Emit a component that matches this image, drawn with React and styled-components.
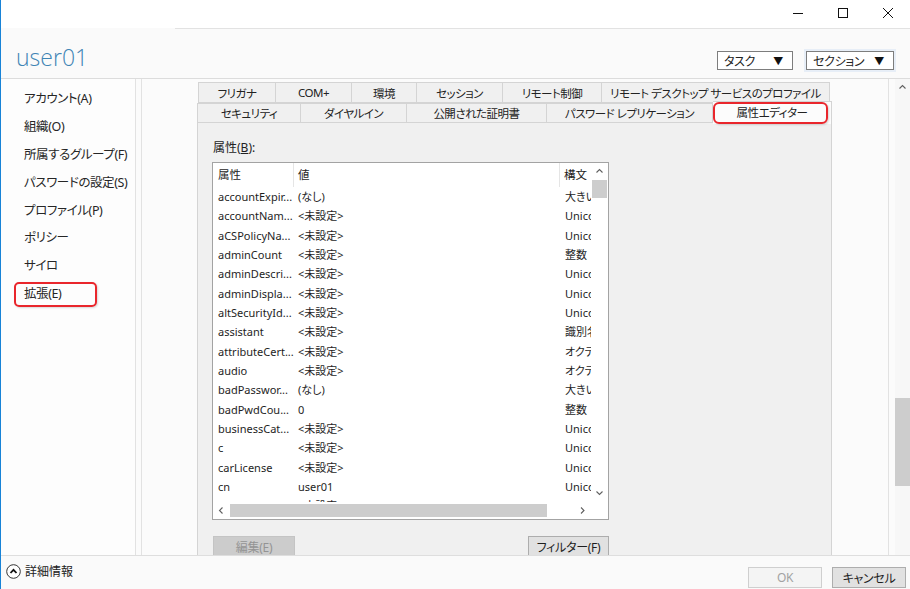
import React from 'react';
import styled, { createGlobalStyle } from 'styled-components';

const GlobalStyle = createGlobalStyle`
  html, body {
    margin: 0;
    padding: 0;
    background: #fff;
  }
  body {
    font-family: "Noto Sans", "Noto Sans CJK JP", sans-serif;
    font-feature-settings: "palt";
    color: #1e1e1e;
  }
`;

const Window = styled.div`
  width: 910px;
  height: 589px;
  box-sizing: border-box;
  border-left: 1px solid #1883d7;
  display: flex;
  flex-direction: column;
  overflow: hidden;
  background: #fff;
`;

const TitleBar = styled.div`
  height: 28px;
  flex: none;
  display: flex;
  justify-content: flex-end;
  background: #fff;
`;

const WinButton = styled.div`
  width: 45px;
  height: 26px;
  display: flex;
  align-items: center;
  justify-content: center;
`;

const Header = styled.header`
  height: 51px;
  flex: none;
  box-sizing: border-box;
  display: flex;
  align-items: flex-end;
  justify-content: space-between;
  padding: 0 16px 7px 15px;
  border-bottom: 1px solid #dcdcdc;
  background: linear-gradient(#e2e2e2, #e2e2e2) no-repeat 174px 0 / 100% 1px,
    #fafafa;
`;

const Title = styled.h1`
  margin: 0 0 -1px;
  font-family: "Open Sans", "Noto Sans", sans-serif;
  font-weight: 300;
  font-size: 23px;
  line-height: 30px;
  color: #3f85b5;
`;

const HeaderMenus = styled.div`
  display: flex;
  gap: 13px;
  margin-bottom: 1px;
`;

const Dropdown = styled.div`
  width: ${(p) => p.$width}px;
  height: 19px;
  box-sizing: border-box;
  border: 1px solid #7d7d7d;
  background: #fff;
  display: flex;
  align-items: center;
  justify-content: space-between;
  padding: 0 9px 0 6px;
  font-size: 12px;
  letter-spacing: -0.3px;
  color: #222;
  box-shadow: ${(p) => (p.$focus ? '0 0 0 2px #e7eef7' : 'none')};
`;

const Arrow = styled.span`
  font-size: 10px;
  color: #111;
`;

const Body = styled.div`
  flex: 1;
  display: flex;
  min-height: 0;
  overflow: hidden;
`;

const Nav = styled.nav`
  width: 135px;
  flex: none;
  box-sizing: border-box;
  border-right: 1px solid #e2e2e2;
  padding-top: 6px;
  position: relative;
  background: #fdfdfd;
`;

const NavItem = styled.div`
  position: relative;
  height: 27.9px;
  line-height: 27.9px;
  padding-left: 23px;
  font-size: 12.5px;
  letter-spacing: -0.4px;
  color: #262626;
  white-space: nowrap;

  &::after {
    content: '';
    display: ${(p) => (p.$marked ? 'block' : 'none')};
    position: absolute;
    left: 13px;
    top: 2px;
    width: 83px;
    height: 25px;
    box-sizing: border-box;
    border: 2px solid #e9262c;
    border-radius: 5px;
    box-shadow: 1px 1px 2px rgba(0, 0, 0, 0.15);
  }
`;

const Spacer = styled.div`
  width: 6px;
  flex: none;
  box-sizing: border-box;
  border-right: 1px solid #e2e2e2;
  background: #fbfbfb;
`;

const Content = styled.section`
  width: 746px;
  flex: none;
  box-sizing: border-box;
  padding: 3px 0 0 55px;
  background: #fbfbfb;
  display: flex;
  flex-direction: column;
`;

const TabArea = styled.div`
  width: 635px;
  flex: 1;
  display: flex;
  flex-direction: column;
`;

const TabRow = styled.div`
  display: flex;
  height: ${(p) => p.$h}px;
  padding-left: ${(p) => p.$indent}px;
  position: relative;
  z-index: ${(p) => (p.$front ? 2 : 1)};
`;

const Tab = styled.div`
  position: relative;
  width: ${(p) => p.$w}px;
  box-sizing: border-box;
  display: flex;
  align-items: center;
  justify-content: center;
  font-size: 11.5px;
  letter-spacing: -0.5px;
  color: #222;
  white-space: nowrap;
  border: 1px solid #d4d4d4;
  border-left-width: ${(p) => (p.$first ? 1 : 0)}px;
  border-bottom-width: ${(p) => (p.$active ? 0 : 1)}px;
  background: ${(p) => (p.$active ? '#fcfcfc' : '#f0f0f0')};
  margin-top: ${(p) => (p.$active ? -2 : 0)}px;
  height: ${(p) => (p.$active ? 'calc(100% + 3px)' : '100%')};
  padding-bottom: ${(p) => (p.$active ? 2 : 0)}px;

  &::after {
    content: '';
    display: ${(p) => (p.$marked ? 'block' : 'none')};
    position: absolute;
    left: 0;
    right: 3px;
    top: 0;
    bottom: 0;
    border: 2px solid #e9262c;
    border-radius: 6px;
    box-shadow: 1px 1px 2px rgba(0, 0, 0, 0.15);
  }
`;

const Panel = styled.div`
  flex: 1;
  box-sizing: border-box;
  border: 1px solid #d4d4d4;
  background: #f0f0f0;
  padding: 17px 14px 0;
  margin-top: -1px;
`;

const FieldLabel = styled.div`
  font-size: 12px;
  line-height: 16px;
  color: #222;
  margin-left: 1px;

  u {
    text-decoration: underline;
  }
`;

const ListBox = styled.div`
  margin-top: 6px;
  width: 397px;
  height: 358px;
  box-sizing: border-box;
  border: 1px solid #a3a3a3;
  background: #fff;
  display: grid;
  grid-template-columns: 1fr 17px;
  grid-template-rows: 1fr 17px;
  overflow: hidden;
`;

const ListView = styled.div`
  overflow: hidden;
  display: grid;
  grid-template-columns: 81px 266px 1fr;
  grid-template-rows: 24px;
  grid-auto-rows: 19.33px;
  align-content: start;
  font-size: 11px;
  color: #1e1e1e;
`;

const HeadCell = styled.div`
  line-height: 22px;
  padding: 1px 0 0 ${(p) => p.$pad}px;
  border-right: ${(p) => (p.$sep ? '1px solid #e5e5e5' : 'none')};
  white-space: nowrap;
  overflow: hidden;
  font-size: 11.5px;
`;

const Cell = styled.div`
  line-height: 19.33px;
  padding-left: ${(p) => p.$pad}px;
  white-space: nowrap;
  overflow: hidden;
`;

const VScroll = styled.div`
  display: flex;
  flex-direction: column;
  background: #fff;
`;

const HScroll = styled.div`
  display: flex;
  align-items: center;
  background: #fff;
`;

const ScrollBtn = styled.div`
  width: ${(p) => p.$w || 17}px;
  height: 17px;
  flex: none;
  display: flex;
  align-items: center;
  justify-content: center;
`;

const Track = styled.div`
  flex: 1;
  display: flex;
  flex-direction: ${(p) => (p.$horizontal ? 'row' : 'column')};
  align-items: ${(p) => (p.$horizontal ? 'center' : 'stretch')};
`;

const Thumb = styled.div`
  background: #cdcdcd;
  ${(p) =>
    p.$horizontal
      ? `height: 13px; width: ${p.$size}px; margin-left: ${p.$offset}px;`
      : `width: 15px; height: ${p.$size}px; margin: ${p.$offset}px 0 0 1px;`}
`;

const Corner = styled.div`
  background: #fff;
`;

const ButtonRow = styled.div`
  width: 397px;
  margin-top: 16px;
  display: flex;
  justify-content: space-between;
  padding-left: 1px;
  box-sizing: border-box;
`;

const Button = styled.div`
  width: ${(p) => p.$w}px;
  height: 22px;
  box-sizing: border-box;
  display: flex;
  align-items: center;
  justify-content: center;
  font-size: 12px;
  letter-spacing: -0.3px;
  border: 1px solid ${(p) => (p.$disabled ? '#c4c4c4' : '#adadad')};
  background: ${(p) => (p.$disabled ? '#cccccc' : '#e1e1e1')};
  color: ${(p) => (p.$disabled ? '#949494' : '#1e1e1e')};
`;

const MainScroll = styled.div`
  width: 22px;
  flex: none;
  box-sizing: border-box;
  border-left: 1px solid #e2e2e2;
  background: #fbfbfb;
  display: flex;
  justify-content: flex-end;
`;

const MainTrack = styled.div`
  width: 15px;
  display: flex;
  flex-direction: column;
  background: #f7f7f7;
`;

const MainThumb = styled.div`
  height: 88px;
  margin-top: 302px;
  background: #cdcdcd;
`;

const Footer = styled.footer`
  height: 34px;
  flex: none;
  box-sizing: border-box;
  border-top: 1px solid #dedede;
  background: #fafafa;
  display: flex;
  justify-content: space-between;
  padding: 0 4px 0 5px;
`;

const Details = styled.div`
  display: flex;
  align-items: center;
  gap: 4px;
  font-size: 12px;
  color: #222;
  margin-top: 6px;
  align-self: flex-start;
`;

const FooterButtons = styled.div`
  display: flex;
  gap: 10px;
  align-self: flex-end;
  margin-bottom: 1px;
`;

const DialogButton = styled.div`
  width: 74px;
  height: 21px;
  box-sizing: border-box;
  display: flex;
  align-items: center;
  justify-content: center;
  font-size: 12px;
  letter-spacing: -0.3px;
  border: 1px solid ${(p) => (p.$disabled ? '#cfcfcf' : '#adadad')};
  background: ${(p) => (p.$disabled ? '#f4f4f4' : '#e1e1e1')};
  color: ${(p) => (p.$disabled ? '#a2a2a2' : '#1e1e1e')};
`;

const Chevron = ({ dir }) => {
  const paths = {
    up: 'M1.5 5.5 L4.5 2.5 L7.5 5.5',
    down: 'M1.5 2.5 L4.5 5.5 L7.5 2.5',
    left: 'M5.5 1.5 L2.5 4.5 L5.5 7.5',
    right: 'M3 1.5 L6 4.5 L3 7.5',
  };
  return (
    <svg width="9" height="9" viewBox="0 0 9 9">
      <path d={paths[dir]} fill="none" stroke="#606060" strokeWidth="1.1" />
    </svg>
  );
};

const navItems = [
  'アカウント(A)',
  '組織(O)',
  '所属するグループ(F)',
  'パスワードの設定(S)',
  'プロファイル(P)',
  'ポリシー',
  'サイロ',
  '拡張(E)',
];

const tabsTop = [
  ['フリガナ', 78],
  ['COM+', 76],
  ['環境', 65],
  ['セッション', 86],
  ['リモート制御', 99],
  ['リモート デスクトップ サービスのプロファイル', 228],
];

const tabsBottom = [
  ['セキュリティ', 104],
  ['ダイヤルイン', 106],
  ['公開された証明書', 140],
  ['パスワード レプリケーション', 166],
  ['属性エディター', 119],
];

const rows = [
  ['accountExpir...', '(なし)', '大きい整数'],
  ['accountNam...', '<未設定>', 'Unicode 文字列'],
  ['aCSPolicyNa...', '<未設定>', 'Unicode 文字列'],
  ['adminCount', '<未設定>', '整数'],
  ['adminDescri...', '<未設定>', 'Unicode 文字列'],
  ['adminDispla...', '<未設定>', 'Unicode 文字列'],
  ['altSecurityId...', '<未設定>', 'Unicode 文字列'],
  ['assistant', '<未設定>', '識別名'],
  ['attributeCert...', '<未設定>', 'オクテット文字列'],
  ['audio', '<未設定>', 'オクテット文字列'],
  ['badPasswor...', '(なし)', '大きい整数'],
  ['badPwdCou...', '0', '整数'],
  ['businessCat...', '<未設定>', 'Unicode 文字列'],
  ['c', '<未設定>', 'Unicode 文字列'],
  ['carLicense', '<未設定>', 'Unicode 文字列'],
  ['cn', 'user01', 'Unicode 文字列'],
  ['co', '<未設定>', 'Unicode 文字列'],
];

function WindowControls() {
  return (
    <>
      <WinButton>
        <svg width="10" height="10" viewBox="0 0 10 10">
          <path d="M0 5.5 H10" stroke="#111" strokeWidth="1" />
        </svg>
      </WinButton>
      <WinButton>
        <svg width="10" height="10" viewBox="0 0 10 10">
          <rect x="0.5" y="0.5" width="9" height="9" fill="none" stroke="#111" strokeWidth="1" />
        </svg>
      </WinButton>
      <WinButton>
        <svg width="10" height="10" viewBox="0 0 10 10">
          <path d="M0 0 L10 10 M10 0 L0 10" stroke="#111" strokeWidth="1" />
        </svg>
      </WinButton>
    </>
  );
}

function AttributeList() {
  return (
    <ListBox>
      <ListView>
        <HeadCell $pad={5} $sep>属性</HeadCell>
        <HeadCell $pad={4} $sep>値</HeadCell>
        <HeadCell $pad={4}>構文</HeadCell>
        {rows.map(([name, value, syntax]) => (
          <React.Fragment key={name}>
            <Cell $pad={5}>{name}</Cell>
            <Cell $pad={4}>{value}</Cell>
            <Cell $pad={5}>{syntax}</Cell>
          </React.Fragment>
        ))}
      </ListView>
      <VScroll>
        <ScrollBtn>
          <Chevron dir="up" />
        </ScrollBtn>
        <Track>
          <Thumb $size={18} $offset={0} />
        </Track>
        <ScrollBtn>
          <Chevron dir="down" />
        </ScrollBtn>
      </VScroll>
      <HScroll>
        <ScrollBtn>
          <Chevron dir="left" />
        </ScrollBtn>
        <Track $horizontal>
          <Thumb $horizontal $size={317} $offset={0} />
        </Track>
        <ScrollBtn>
          <Chevron dir="right" />
        </ScrollBtn>
      </HScroll>
      <Corner />
    </ListBox>
  );
}

export default function App() {
  return (
    <>
      <GlobalStyle />
      <Window>
        <TitleBar>
          <WindowControls />
        </TitleBar>
        <Header>
          <Title>user01</Title>
          <HeaderMenus>
            <Dropdown $width={76}>
              タスク <Arrow>▼</Arrow>
            </Dropdown>
            <Dropdown $width={88} $focus>
              セクション <Arrow>▼</Arrow>
            </Dropdown>
          </HeaderMenus>
        </Header>
        <Body>
          <Nav>
            {navItems.map((item) => (
              <NavItem key={item} $marked={item === '拡張(E)'}>
                {item}
              </NavItem>
            ))}
          </Nav>
          <Spacer />
          <Content>
            <TabArea>
              <TabRow $h={21} $indent={1}>
                {tabsTop.map(([label, w], i) => (
                  <Tab key={label} $w={w} $first={i === 0}>
                    {label}
                  </Tab>
                ))}
              </TabRow>
              <TabRow $h={20} $indent={0} $front>
                {tabsBottom.map(([label, w], i) => {
                  const active = label === '属性エディター';
                  return (
                    <Tab
                      key={label}
                      $w={w}
                      $first={i === 0}
                      $active={active}
                      $marked={active}
                    >
                      {label}
                    </Tab>
                  );
                })}
              </TabRow>
              <Panel>
                <FieldLabel>
                  属性(<u>B</u>):
                </FieldLabel>
                <AttributeList />
                <ButtonRow>
                  <Button $w={82} $disabled>
                    編集(E)
                  </Button>
                  <Button $w={81}>フィルター(F)</Button>
                </ButtonRow>
              </Panel>
            </TabArea>
          </Content>
          <MainScroll>
            <MainTrack>
              <ScrollBtn $w={15}>
                <Chevron dir="up" />
              </ScrollBtn>
              <MainThumb />
            </MainTrack>
          </MainScroll>
        </Body>
        <Footer>
          <Details>
            <svg width="15" height="15" viewBox="0 0 15 15">
              <circle cx="7.5" cy="7.5" r="6.8" fill="#fff" stroke="#333" strokeWidth="1" />
              <path d="M4.5 9 L7.5 5.8 L10.5 9" fill="none" stroke="#111" strokeWidth="1.8" />
            </svg>
            詳細情報
          </Details>
          <FooterButtons>
            <DialogButton $disabled>OK</DialogButton>
            <DialogButton>キャンセル</DialogButton>
          </FooterButtons>
        </Footer>
      </Window>
    </>
  );
}
